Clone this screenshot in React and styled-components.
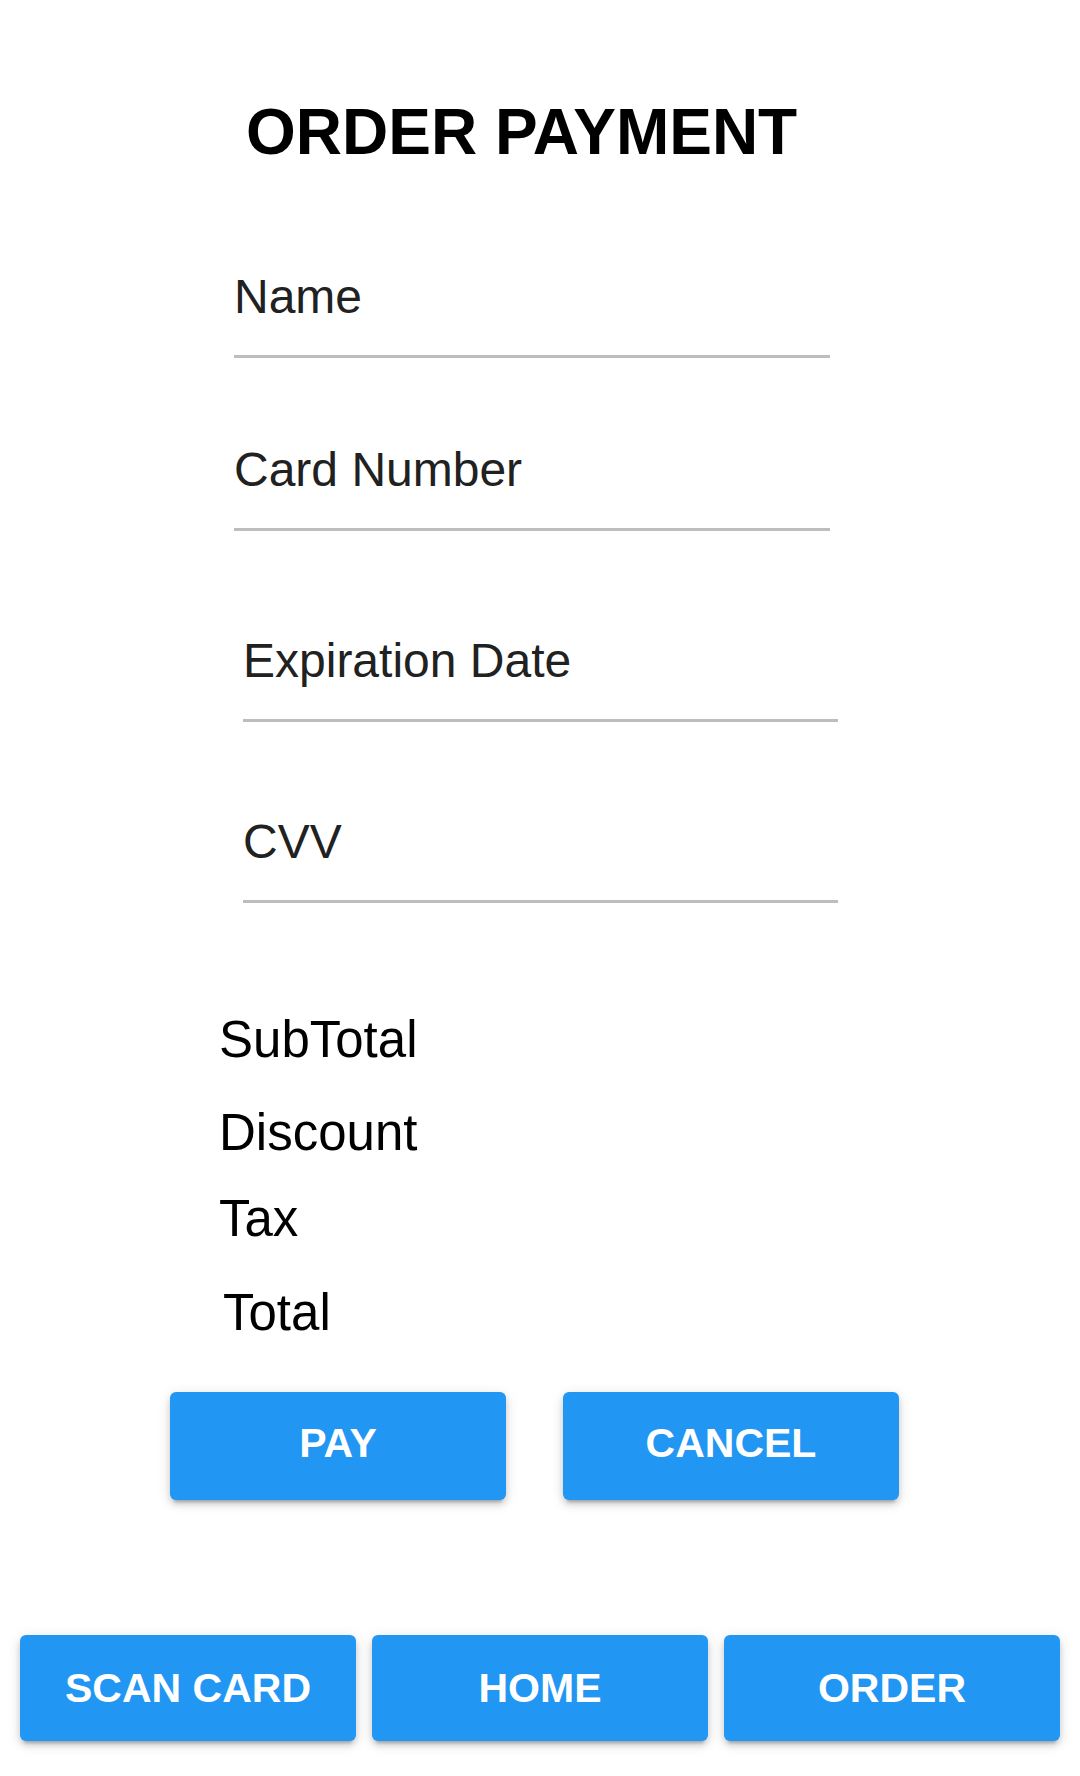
import React from 'react';
import styled, { createGlobalStyle } from 'styled-components';

const GlobalStyle = createGlobalStyle`
  html, body {
    margin: 0;
    padding: 0;
    background: #ffffff;
  }
  body {
    font-family: "Liberation Sans", Arial, Helvetica, sans-serif;
  }
`;

const Page = styled.div`
  width: 1080px;
  height: 1776px;
  display: flex;
  flex-direction: column;
  background: #fff;
  overflow: hidden;
`;

const Title = styled.h1`
  margin: 100px 0 0 246px;
  font-size: 64px;
  line-height: 1;
  font-weight: 700;
  color: #000;
`;

const Field = styled.div`
  width: ${p => p.$width}px;
  margin: ${p => p.$mt}px 0 0 ${p => p.$ml}px;
  padding-bottom: 34px;
  border-bottom: 3px solid #bdbdbd;
`;

const FieldLabel = styled.div`
  font-size: 48px;
  line-height: 1;
  color: #212121;
`;

const SummaryRow = styled.div`
  margin: ${p => p.$mt}px 0 0 ${p => p.$ml || 219}px;
  font-size: 51px;
  line-height: 1;
  color: #000;
`;

const ActionRow = styled.div`
  display: flex;
  gap: ${p => p.$gap}px;
  margin: ${p => p.$mt}px 0 0 ${p => p.$ml}px;
`;

const BlueButton = styled.button`
  width: 336px;
  height: ${p => p.$h}px;
  display: flex;
  align-items: center;
  justify-content: center;
  padding: 0 0 ${p => p.$pb || 0}px;
  border: none;
  border-radius: 6px;
  background: #2196f3;
  color: #fff;
  font-family: "Liberation Sans", Arial, Helvetica, sans-serif;
  font-size: 41px;
  line-height: 1;
  font-weight: 700;
  text-transform: uppercase;
  cursor: pointer;
  box-shadow: 0 6px 3px -4px rgba(0,0,0,0.2), 0 4px 6px 0 rgba(0,0,0,0.14), 0 3px 14px 0 rgba(0,0,0,0.12);
`;

const fields = [
  { label: 'Name', mt: 109, ml: 234, width: 596 },
  { label: 'Card Number', mt: 88, ml: 234, width: 596 },
  { label: 'Expiration Date', mt: 106, ml: 243, width: 595 },
  { label: 'CVV', mt: 96, ml: 243, width: 595 },
];

const summary = [
  { label: 'SubTotal', mt: 111 },
  { label: 'Discount', mt: 42 },
  { label: 'Tax', mt: 35 },
  { label: 'Total', mt: 43, ml: 223 },
];

export default function App() {
  return (
    <>
      <GlobalStyle />
      <Page>
        <Title>ORDER PAYMENT</Title>

        {fields.map(f => (
          <Field key={f.label} $mt={f.mt} $ml={f.ml} $width={f.width}>
            <FieldLabel>{f.label}</FieldLabel>
          </Field>
        ))}

        {summary.map(s => (
          <SummaryRow key={s.label} $mt={s.mt} $ml={s.ml}>
            {s.label}
          </SummaryRow>
        ))}

        <ActionRow $mt={54} $ml={170} $gap={57}>
          <BlueButton $h={108} $pb={6}>Pay</BlueButton>
          <BlueButton $h={108} $pb={6}>Cancel</BlueButton>
        </ActionRow>

        <ActionRow $mt={135} $ml={20} $gap={16}>
          <BlueButton $h={106}>Scan Card</BlueButton>
          <BlueButton $h={106}>Home</BlueButton>
          <BlueButton $h={106}>Order</BlueButton>
        </ActionRow>
      </Page>
    </>
  );
}
